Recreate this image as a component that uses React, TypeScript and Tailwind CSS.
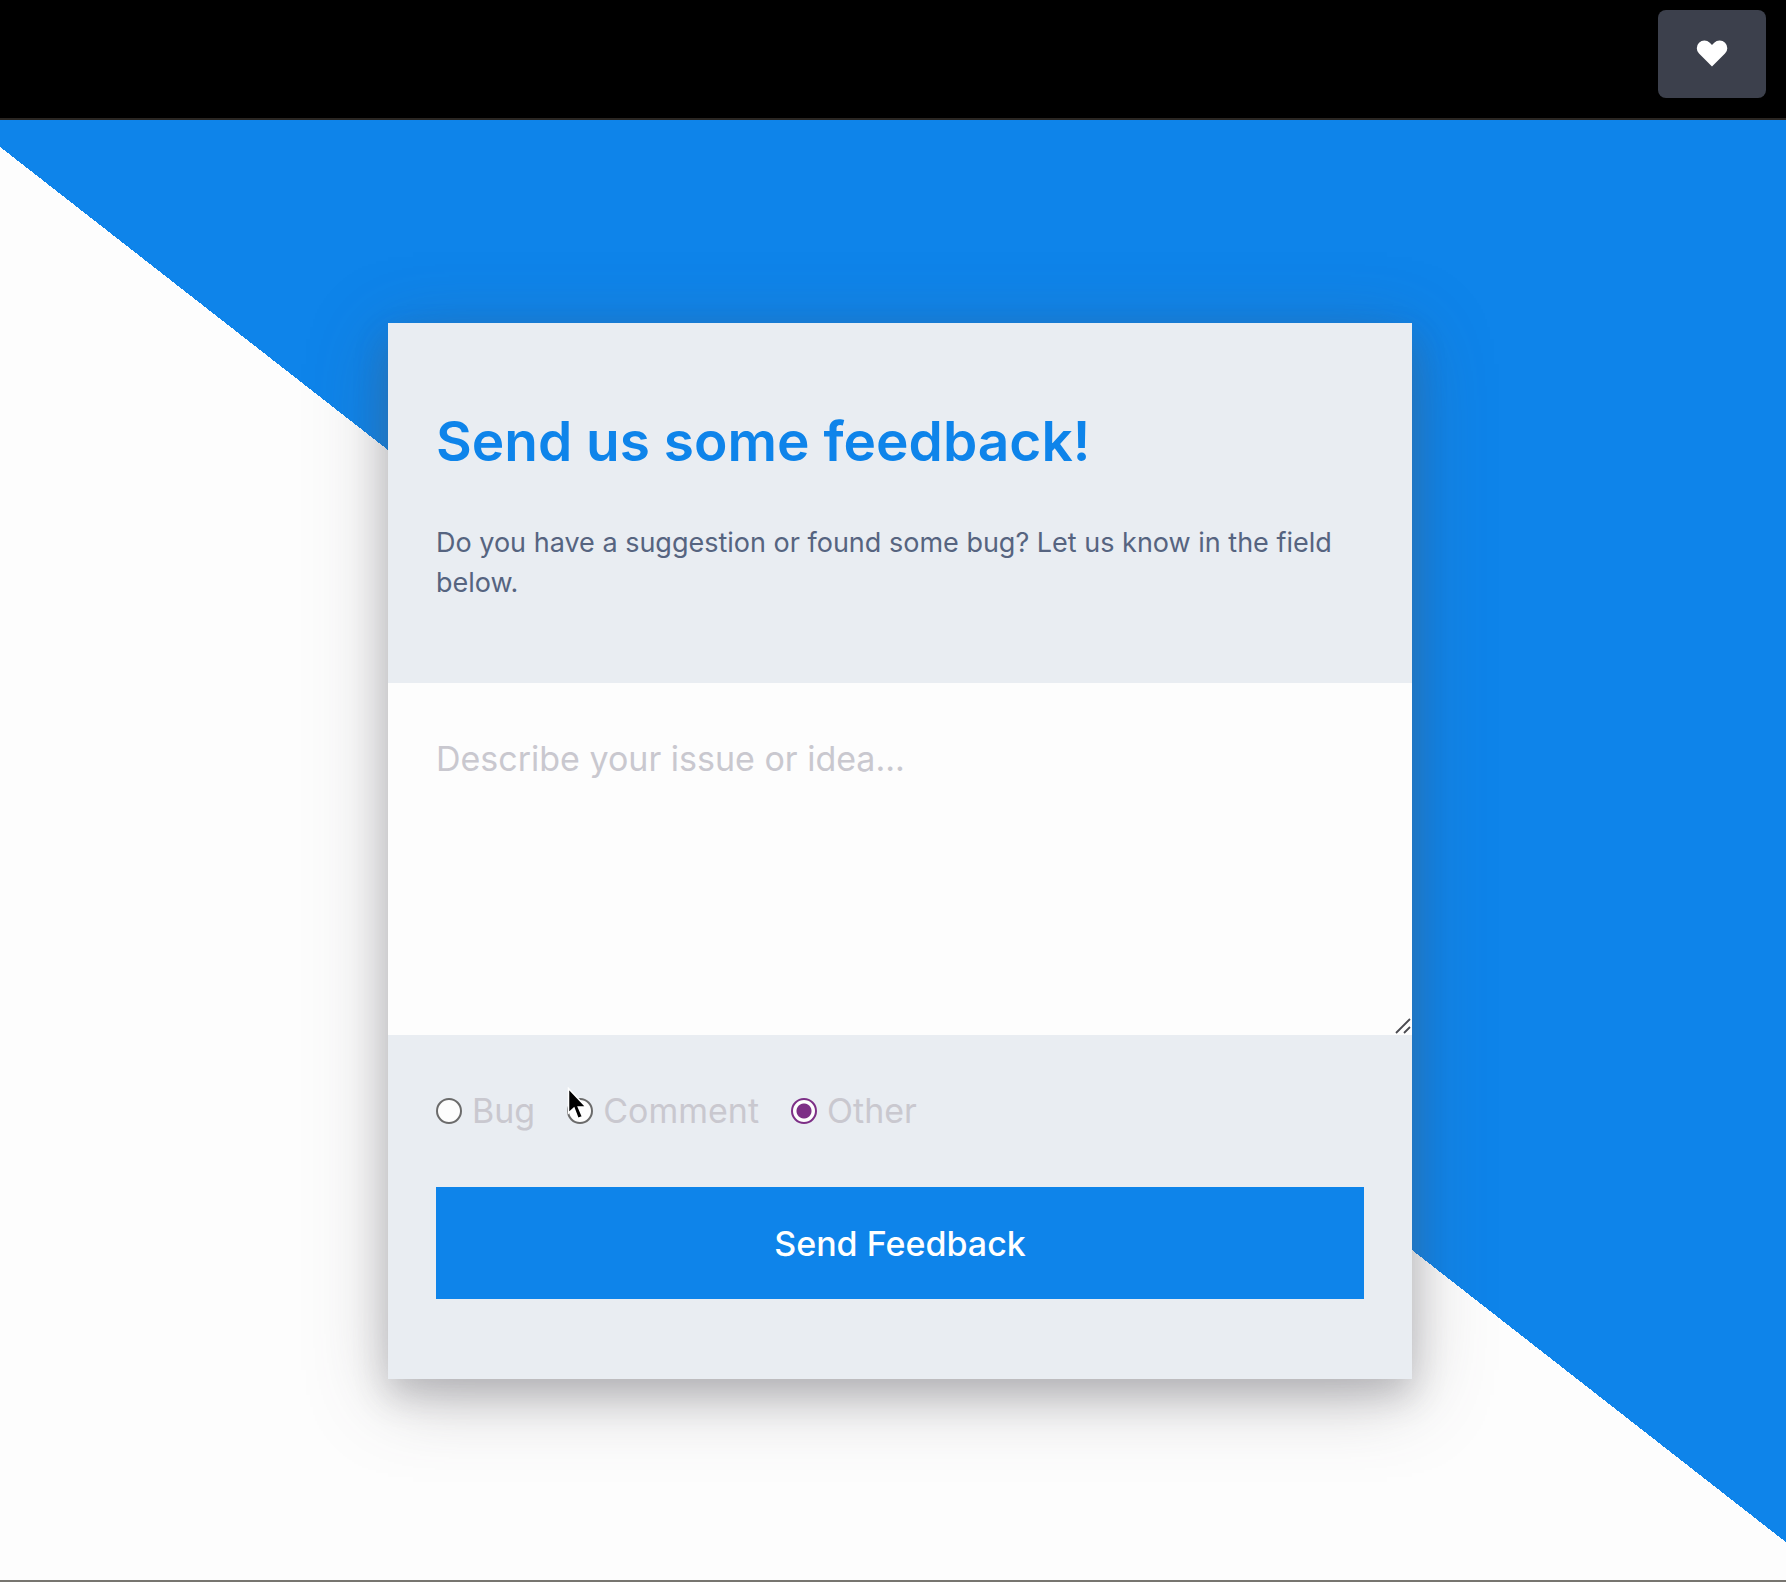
const kinds = [
  { id: "bug", label: "Bug" },
  { id: "comment", label: "Comment" },
  { id: "other", label: "Other" },
];

function Heart() {
  return (
    <svg viewBox="0 0 20 20" className="size-[38px]" fill="currentColor" aria-hidden="true">
      <path
        fillRule="evenodd"
        clipRule="evenodd"
        d="M3.172 5.172a4 4 0 015.656 0L10 6.343l1.172-1.171a4 4 0 115.656 5.656L10 17.657l-6.828-6.829a4 4 0 010-5.656z"
      />
    </svg>
  );
}

function Pointer() {
  return (
    <svg
      viewBox="0 0 20 34"
      className="pointer-events-none absolute top-1 left-0 h-[34px] w-5"
      aria-hidden="true"
    >
      <path
        d="M1.500 1.500V26l5.500-5 4 10.500 4.500-1.900-4.200-9.600H19z"
        fill="#000"
        stroke="#fff"
        strokeWidth="1.500"
      />
    </svg>
  );
}

function ResizeGrip() {
  return (
    <svg
      viewBox="0 0 16 16"
      className="pointer-events-none absolute right-px bottom-px size-4"
      stroke="#4a4a50"
      strokeWidth="1.800"
      aria-hidden="true"
    >
      <path d="M1 15L15 1M9 15l6-6" />
    </svg>
  );
}

export default function App() {
  return (
    <div className="flex min-h-screen flex-col overflow-hidden bg-black font-['Inter',sans-serif]">
      <nav className="flex justify-end border-b-2 border-[#2a2622] pt-2.5 pr-5 pb-5">
        <button
          type="button"
          aria-label="Feedback"
          className="flex h-[88px] w-[108px] items-center justify-center rounded-lg bg-[#3c404c] pb-1 text-white"
        >
          <Heart />
        </button>
      </nav>

      <main className="-mr-3.5 flex flex-1 items-center justify-center border-b-2 border-[#777570] bg-[linear-gradient(38deg,#fdfdfd_50%,#0e84ea_50%)] pt-0.5">
        <form
          onSubmit={(e) => e.preventDefault()}
          className="flex w-full max-w-[1024px] flex-col bg-[#e9edf2] shadow-[0_16px_72px_rgba(84,82,92,0.34),0_16px_32px_rgba(84,82,92,0.24)]"
        >
          <header className="px-12 pt-20 pb-20">
            <h1 className="text-[55px] leading-[76px] font-semibold text-[#0e84ea]">
              Send us some feedback!
            </h1>
            <p className="mt-11 text-[27px] leading-10 text-[#566480]">
              Do you have a suggestion or found some bug? Let us know in the field below.
            </p>
          </header>

          <div className="relative">
            <textarea
              aria-label="Feedback"
              placeholder="Describe your issue or idea..."
              className="block h-[352px] w-full resize-none bg-[#fdfdfd] px-12 py-12 text-[34px] leading-[56px] outline-none placeholder:text-[#c9c8cf]"
            />
            <ResizeGrip />
          </div>

          <div className="px-12 pt-12 pb-20">
            <fieldset className="flex gap-8 text-[34px] leading-[56px] text-[#c9c8cf]">
              {kinds.map((kind) => (
                <label key={kind.id} className="relative flex items-center gap-2.5">
                  <input
                    type="radio"
                    name="kind"
                    value={kind.id}
                    defaultChecked={kind.id === "other"}
                    className="size-[26px] appearance-none rounded-full border-2 border-[#6b6b6b] bg-[#fdfdfd] checked:border-[#7d2f86] checked:bg-[radial-gradient(circle,#7d2f86_7px,#fdfdfd_8px)]"
                  />
                  {kind.label}
                  {kind.id === "comment" && <Pointer />}
                </label>
              ))}
            </fieldset>
            <button
              type="submit"
              className="mt-12 block h-28 w-full bg-[#0e84ea] text-[34px] font-medium text-white"
            >
              Send Feedback
            </button>
          </div>
        </form>
      </main>
    </div>
  );
}
